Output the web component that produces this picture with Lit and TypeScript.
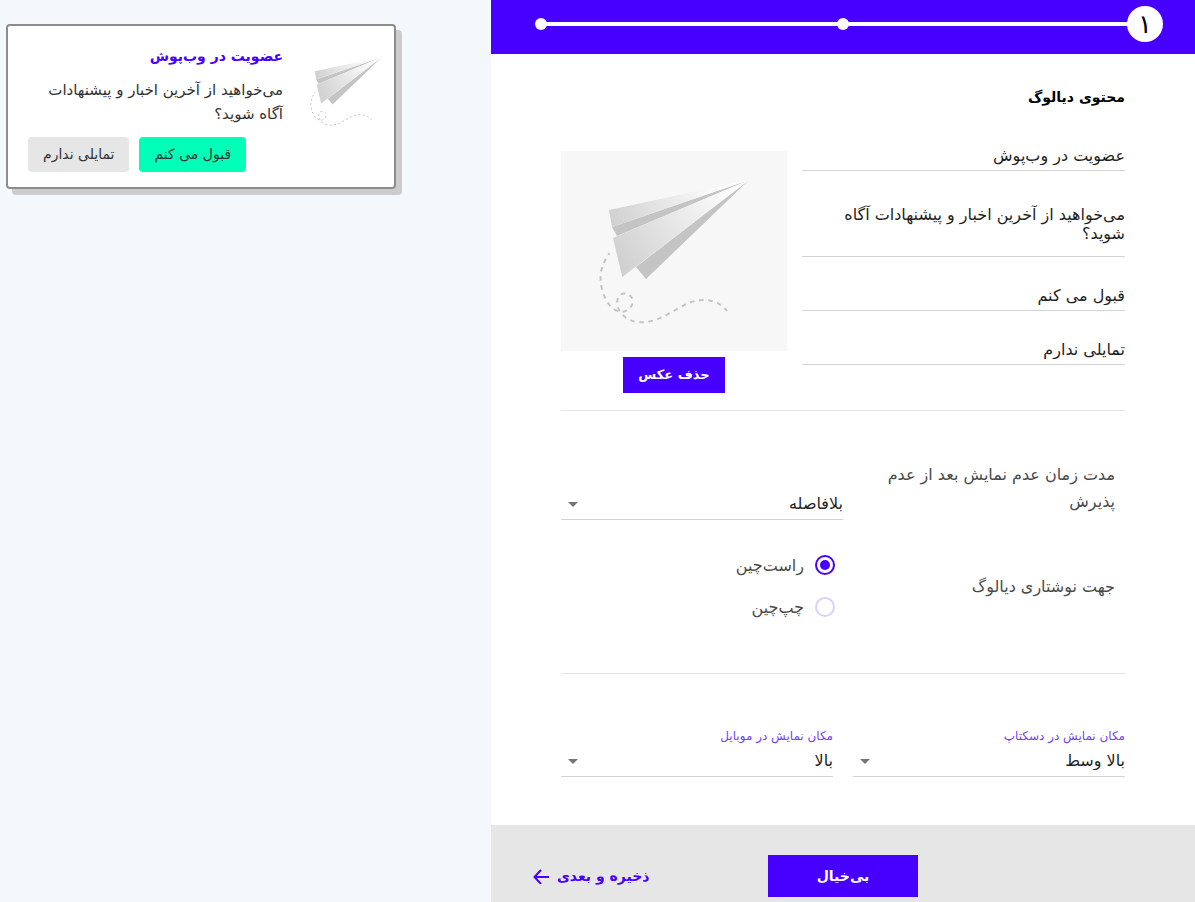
import { LitElement, html, css, svg } from "lit";
import { customElement, state } from "lit/decorators.js";

const plane = (id: string) => svg`
  <defs>
    <linearGradient id="${id}-top" x1="48" y1="70" x2="188" y2="29" gradientUnits="userSpaceOnUse">
      <stop offset="0" stop-color="#d0d0d0" />
      <stop offset="0.7" stop-color="#f8f8f8" />
      <stop offset="1" stop-color="#ffffff" />
    </linearGradient>
    <linearGradient id="${id}-main" x1="54" y1="110" x2="188" y2="29" gradientUnits="userSpaceOnUse">
      <stop offset="0" stop-color="#cfcfcf" />
      <stop offset="0.35" stop-color="#e2e2e2" />
      <stop offset="0.8" stop-color="#fafafa" />
      <stop offset="1" stop-color="#ffffff" />
    </linearGradient>
  </defs>
  <path d="M51 76 188 29 56 85Z" fill="#c4c4c4" />
  <path d="M48 59 188 29 51 76Z" fill="url(#${id}-top)" />
  <path d="M75 116 188 29 85 128Z" fill="#c4c4c4" />
  <path d="M52 87 188 29 61.300 126Z" fill="url(#${id}-main)" />
  <path
    d="M48.500 102C41 113 39 121 39.700 130C40.500 142 47 158 58 160.500C66 162 72 156 71.700 150C71 144.500 67 142.300 63 142.500C57 143 55.500 149 56.500 154C58 164 69 171.300 79 171.300C104 172 120 149 142 149C152 149 160 152.500 166 160"
    fill="none" stroke="#c4c4c4" stroke-width="2" stroke-dasharray="4.500 4.700" stroke-dashoffset="2.500" />
`;

@customElement("paper-plane")
class PaperPlane extends LitElement {
  static styles = css`
    :host { display: block; }
    .art { display: block; width: 100%; height: 100%; }
  `;
  render() {
    return html`<svg class="art" viewBox="13 0 200 200" aria-hidden="true">${plane("wing")}</svg>`;
  }
}

@customElement("app-root")
class AppRoot extends LitElement {
  @state() private heading = "عضویت در وب‌پوش";
  @state() private message = "می‌خواهید از آخرین اخبار و پیشنهادات آگاه شوید؟";
  @state() private accept = "قبول می کنم";
  @state() private decline = "تمایلی ندارم";

  static styles = css`
    :host {
      display: block;
      direction: rtl;
      font-family: "DejaVu Sans", sans-serif;
      font-size: 16px;
      color: #1f1f1f;
    }
    * { box-sizing: border-box; }
    button, input, textarea, select { font: inherit; color: inherit; margin: 0; border: 0; border-radius: 0; }
    button { cursor: pointer; }
    .page { display: grid; grid-template-columns: 704fr 491fr; min-height: 100vh; }
    .editor { display: flex; flex-direction: column; background: #fff; min-width: 0; }

    .steps {
      display: flex; align-items: center; list-style: none; margin: 0;
      padding: 6px 32px 12px; background: #4700ff;
    }
    .step { flex: none; width: 36px; height: 36px; display: grid; place-items: center; }
    .current { position: relative; border-radius: 50%; background: #fff; font-size: 26px; line-height: 36px; color: #000; }
    .dot { width: 12px; height: 12px; border-radius: 50%; background: #fff; }
    .link { flex: 1; height: 4px; background: #fff; margin: 0 -18px; }

    .form { flex: 1; padding: 28px 70px 48px; }
    .title { margin: 0 0 29px; font-size: 14px; line-height: 30px; font-weight: 700; color: #000; }
    .content { display: grid; grid-template-columns: 323fr 226fr; gap: 15px; }
    .fields { display: flex; flex-direction: column; gap: 24px; }
    .field {
      display: block; width: 100%; height: 30px; padding: 0; outline: 0;
      background: transparent; border-bottom: 1px solid #d2d2d2; text-align: right;
    }
    .area { height: 52px; margin-top: 10px; line-height: 19px; resize: none; overflow: hidden; }
    .media { display: flex; flex-direction: column; align-items: center; gap: 6px; padding-top: 10px; }
    .frame { width: 100%; height: 200px; background: #f7f7f7; }
    .frame-art { height: 200px; }
    .remove { height: 36px; padding: 0 15px 2px; background: #4700ff; color: #fff; font-size: 13px; font-weight: 700; }

    .rule { border: 0; border-top: 1px solid #e4e4e4; margin: 17px 0 50px; }
    .rule-low { margin: 45px 0 53px; }
    .options { display: grid; grid-template-columns: 1fr 1fr; row-gap: 24px; align-items: center; }
    .caption { padding-right: 10px; line-height: 27px; color: #4a4a4a; }
    label.caption { align-self: start; }
    .pick { display: grid; align-self: end; align-items: center; }
    .options .pick { padding-top: 27px; }
    .select {
      grid-area: 1 / 1; width: 100%; height: 32px; padding: 0; outline: 0;
      appearance: none; background: transparent; border-bottom: 1px solid #d2d2d2;
    }
    .arrow {
      grid-area: 1 / 1; justify-self: end; margin-left: 7px; pointer-events: none;
      border: 5px solid transparent; border-top-color: #757575; border-bottom: 0;
    }
    .radios { padding-right: 8px; }
    .radio { display: flex; align-items: center; gap: 11px; height: 42px; color: #4a4a4a; }
    .knob {
      appearance: none; width: 20px; height: 20px; border: 2px solid #dacfff; border-radius: 50%;
      display: grid; place-items: center;
    }
    .knob:checked { border-color: #4700ff; }
    .knob:checked::before { content: ""; width: 10px; height: 10px; border-radius: 50%; background: #4700ff; }
    .places { display: grid; grid-template-columns: 1fr 1fr; gap: 20px; }
    .small { display: block; font-size: 12px; line-height: 18px; color: #7340f5; }

    .footer {
      display: grid; grid-template-columns: 1fr 150px 1fr; align-items: center;
      padding: 30px 42px 5px; background: #e6e6e6; font-size: 14px; font-weight: 700;
    }
    .cancel { grid-column: 2; height: 42px; background: #4700ff; color: #fff; }
    .save {
      justify-self: end; display: flex; align-items: center; gap: 8px; padding: 0;
      background: transparent; color: #4700ff;
    }
    .back { width: 16px; height: 16px; }

    .preview { background: #f4f7fc; padding: 24px 6px; direction: ltr; min-width: 0; }
    .card {
      direction: rtl; display: grid; grid-template-columns: 96px 1fr; column-gap: 15px;
      width: 390px; max-width: 100%; padding: 17px 0 15px 20px; border: 2px solid #8c8c8c;
      border-radius: 4px; background: #fff; box-shadow: 6px 6px 0 #ccc; color: #333;
    }
    .card-art { height: 96px; }
    .card-title { margin: 0 0 9px; font-size: 14px; line-height: 26px; color: #4700ff; }
    .card-text { margin: 0 0 11px; font-size: 15px; line-height: 24px; padding-left: 20px; }
    .actions { display: flex; justify-content: flex-end; gap: 10px; }
    .action { height: 35px; padding: 0 15px 2px; border-radius: 4px; background: #e6e6e6; font-size: 14px; }
    .yes { background: #00ffb7; }
  `;

  private pick(id: string, value: string) {
    return html`<div class="pick">
      <select class="select" id=${id}><option>${value}</option></select>
      <span class="arrow"></span>
    </div>`;
  }

  render() {
    return html`
      <div class="page">
        <main class="editor">
          <ol class="steps">
            <li class="step current">۱</li>
            <li class="link" role="presentation"></li>
            <li class="step"><span class="dot"></span></li>
            <li class="link" role="presentation"></li>
            <li class="step"><span class="dot"></span></li>
          </ol>
          <form class="form" @submit=${(e: Event) => e.preventDefault()}>
            <h1 class="title">محتوی دیالوگ</h1>
            <div class="content">
              <div class="fields">
                <input class="field" aria-label="عنوان" .value=${this.heading}
                  @input=${(e: any) => (this.heading = e.target.value)} />
                <textarea class="field area" aria-label="متن" .value=${this.message}
                  @input=${(e: any) => (this.message = e.target.value)}></textarea>
                <input class="field" aria-label="دکمه تایید" .value=${this.accept}
                  @input=${(e: any) => (this.accept = e.target.value)} />
                <input class="field" aria-label="دکمه رد" .value=${this.decline}
                  @input=${(e: any) => (this.decline = e.target.value)} />
              </div>
              <div class="media">
                <div class="frame"><paper-plane class="frame-art"></paper-plane></div>
                <button class="remove" type="button">حذف عکس</button>
              </div>
            </div>
            <hr class="rule" />
            <div class="options">
              <label class="caption" for="delay">مدت زمان عدم نمایش بعد از عدم پذیرش</label>
              ${this.pick("delay", "بلافاصله")}
              <span class="caption" id="dir">جهت نوشتاری دیالوگ</span>
              <div class="radios" role="radiogroup" aria-labelledby="dir">
                <label class="radio"><input class="knob" type="radio" name="dir" checked />راست‌چین</label>
                <label class="radio"><input class="knob" type="radio" name="dir" />چپ‌چین</label>
              </div>
            </div>
            <hr class="rule rule-low" />
            <div class="places">
              <div>
                <label class="small" for="desktop">مکان نمایش در دسکتاپ</label>
                ${this.pick("desktop", "بالا وسط")}
              </div>
              <div>
                <label class="small" for="mobile">مکان نمایش در موبایل</label>
                ${this.pick("mobile", "بالا")}
              </div>
            </div>
          </form>
          <footer class="footer">
            <button class="cancel" type="button">بی‌خیال</button>
            <button class="save" type="button">
              ذخیره و بعدی
              <svg class="back" viewBox="0 0 16 16" aria-hidden="true">
                <path d="M16 9H1.500M8 2 1.500 9 8 16" fill="none" stroke="currentColor" stroke-width="2" />
              </svg>
            </button>
          </footer>
        </main>
        <aside class="preview">
          <section class="card">
            <paper-plane class="card-art"></paper-plane>
            <div>
              <h2 class="card-title">${this.heading}</h2>
              <p class="card-text">${this.message}</p>
              <div class="actions">
                <button class="action yes" type="button">${this.accept}</button>
                <button class="action" type="button">${this.decline}</button>
              </div>
            </div>
          </section>
        </aside>
      </div>
    `;
  }
}
